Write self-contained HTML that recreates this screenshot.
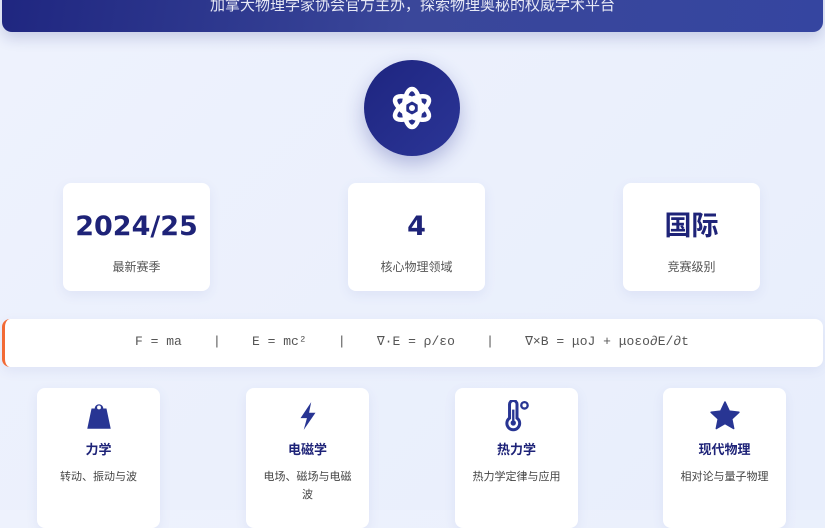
<!DOCTYPE html>
<html><head><meta charset="utf-8"><style>
*{margin:0;padding:0;box-sizing:border-box}
body{width:825px;height:510px;overflow:hidden;background:linear-gradient(135deg,#eef2fd,#e8eefc);font-family:"Liberation Sans","Noto Sans CJK SC",sans-serif;position:relative}
.hdr{position:absolute;left:2px;top:-20px;width:821px;height:52px;border-radius:0 0 10px 10px;background:linear-gradient(100deg,#1f2680,#3a479a 50%,#3545a0);box-shadow:0 6px 14px rgba(30,40,120,.18);color:#e6e8f5;font-size:15px;text-align:center;line-height:20px;padding-top:16px}
.circ{position:absolute;left:364px;top:60px;width:96px;height:96px;border-radius:50%;background:linear-gradient(135deg,#1e2580,#2b3596);box-shadow:0 8px 20px rgba(40,50,150,.3)}
.stat{position:absolute;top:183px;width:137px;height:108px;background:#fff;border-radius:8px;box-shadow:0 4px 12px rgba(60,80,160,.08);text-align:center}
.stat b{display:block;margin-top:26px;font-size:27px;color:#1e2378;height:36px;line-height:36px;font-family:"DejaVu Sans","Noto Sans CJK SC",sans-serif}
.stat i{display:block;font-style:normal;font-size:12px;color:#555;margin-top:13px}
.form{position:absolute;left:2px;top:319px;width:821px;height:48px;background:#fff;border-radius:8px;border-left:3px solid #f26a35;box-shadow:0 4px 12px rgba(60,80,160,.08);font-family:"Liberation Mono","DejaVu Sans Mono",monospace;font-size:13px;color:#555;line-height:46px;white-space:pre}
.card{position:absolute;top:388px;width:123px;height:140px;background:#fff;border-radius:8px;box-shadow:0 4px 12px rgba(60,80,160,.08);text-align:center}
.card svg{display:block;margin:12px auto 0;width:32px;height:32px}
.card b{display:block;margin-top:7px;font-size:13px;color:#1e2378}
.card i{display:block;font-style:normal;font-size:11px;color:#444;margin:10px 14px 0;line-height:18px}
</style></head><body>
<div class="hdr">加拿大物理学家协会官方主办，探索物理奥秘的权威学术平台</div>
<div class="circ"><svg width="96" height="96" viewBox="0 0 96 96"><g fill="none" stroke="#fff" stroke-width="4.5"><ellipse cx="48" cy="48" rx="8" ry="19"/><ellipse cx="48" cy="48" rx="8" ry="19" transform="rotate(60 48 48)"/><ellipse cx="48" cy="48" rx="8" ry="19" transform="rotate(-60 48 48)"/></g><circle cx="48" cy="48" r="3" fill="#fff"/></svg></div>
<div class="stat" style="left:63px;width:147px"><b>2024/25</b><i>最新赛季</i></div>
<div class="stat" style="left:348px"><b>4</b><i>核心物理领域</i></div>
<div class="stat" style="left:623px"><b>国际</b><i>竞赛级别</i></div>
<div class="form"><span style="position:absolute;left:130px">F = ma    |    E = mc²    |    ∇·E = ρ/εo    |    ∇×B = μoJ + μoεo∂E/∂t</span></div>
<div class="card" style="left:37px"><svg viewBox="0 0 30 30"><path d="M11 8a4 4 0 1 1 8 0h3l4 19H4L8 8z" fill="#283593"/><circle cx="15" cy="7" r="1.8" fill="#fff"/></svg><b>力学</b><i>转动、振动与波</i></div>
<div class="card" style="left:246px"><svg viewBox="0 0 30 30"><path d="M18 2L8 17h6l-3 11 11-16h-6z" fill="#283593"/></svg><b>电磁学</b><i>电场、磁场与电磁波</i></div>
<div class="card" style="left:455px"><svg viewBox="0 0 30 30"><path d="M8 4a3.5 3.5 0 0 1 7 0v13a6 6 0 1 1-7 0z" fill="none" stroke="#283593" stroke-width="2.8"/><circle cx="11.5" cy="21.5" r="2.5" fill="#283593"/><path d="M11.5 9v11" stroke="#283593" stroke-width="2.2"/><circle cx="22" cy="5" r="3" fill="none" stroke="#283593" stroke-width="2.2"/></svg><b>热力学</b><i>热力学定律与应用</i></div>
<div class="card" style="left:663px"><svg viewBox="0 0 30 30"><path d="M15 2l4 8.5 9 1-6.7 6.2 1.8 9L15 22l-8.1 4.7 1.8-9L2 11.5l9-1z" fill="#283593" stroke="#283593" stroke-linejoin="round" stroke-width="1.5"/></svg><b>现代物理</b><i>相对论与量子物理</i></div>
</body></html>
